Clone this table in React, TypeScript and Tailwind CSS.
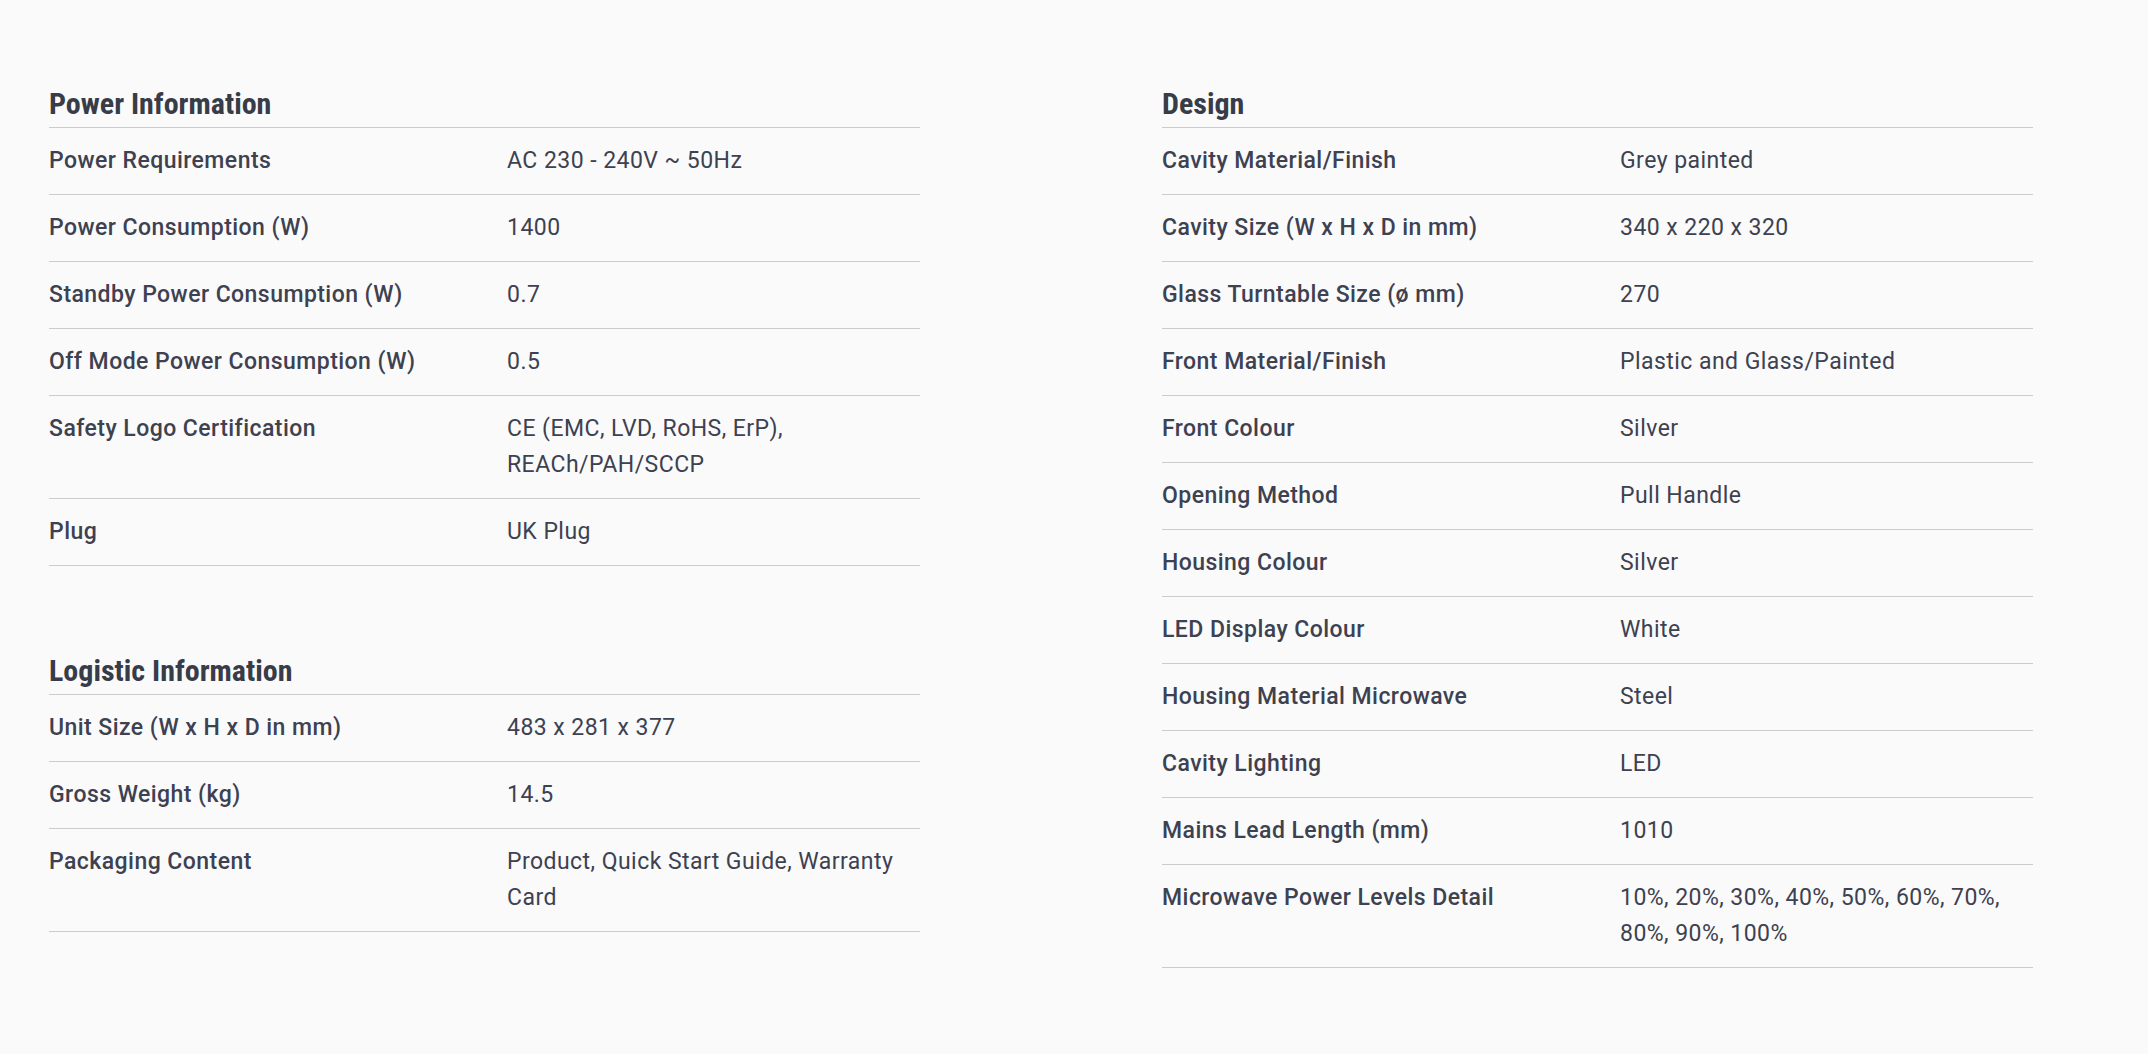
type Row = [string, string];

const power: Row[] = [
  ['Power Requirements', 'AC 230 - 240V ~ 50Hz'],
  ['Power Consumption (W)', '1400'],
  ['Standby Power Consumption (W)', '0.7'],
  ['Off Mode Power Consumption (W)', '0.5'],
  ['Safety Logo Certification', 'CE (EMC, LVD, RoHS, ErP), REACh/PAH/SCCP'],
  ['Plug', 'UK Plug'],
];

const logistic: Row[] = [
  ['Unit Size (W x H x D in mm)', '483 x 281 x 377'],
  ['Gross Weight (kg)', '14.5'],
  ['Packaging Content', 'Product, Quick Start Guide, Warranty Card'],
];

const design: Row[] = [
  ['Cavity Material/Finish', 'Grey painted'],
  ['Cavity Size (W x H x D in mm)', '340 x 220 x 320'],
  ['Glass Turntable Size (ø mm)', '270'],
  ['Front Material/Finish', 'Plastic and Glass/Painted'],
  ['Front Colour', 'Silver'],
  ['Opening Method', 'Pull Handle'],
  ['Housing Colour', 'Silver'],
  ['LED Display Colour', 'White'],
  ['Housing Material Microwave', 'Steel'],
  ['Cavity Lighting', 'LED'],
  ['Mains Lead Length (mm)', '1010'],
  ['Microwave Power Levels Detail', '10%, 20%, 30%, 40%, 50%, 60%, 70%, 80%, 90%, 100%'],
];

function SpecTable({ title, rows }: { title: string; rows: Row[] }) {
  return (
    <section>
      <h2 className="border-b border-[#cccccc] pb-[5px] text-[30px] font-bold leading-[36px] text-[#383c48] [font-stretch:75%]">
        {title}
      </h2>
      <dl>
        {rows.map(([k, v]) => (
          <div key={k} className="flex border-b border-[#cccccc] py-[15px] text-[23px] leading-[36px] tracking-[0.45px]">
            <dt className="w-[458px] shrink-0 font-medium">{k}</dt>
            <dd className="flex-1 pr-[10px]">{v}</dd>
          </div>
        ))}
      </dl>
    </section>
  );
}

export default function App() {
  return (
    <div className="min-h-screen bg-[#fafafa] pl-[49px] pt-[86px] text-[#3d4150] [font-family:Roboto,'Noto_Sans',sans-serif]">
      <div className="flex gap-[242px]">
        <div className="flex w-[871px] flex-col gap-[87px]">
          <SpecTable title="Power Information" rows={power} />
          <SpecTable title="Logistic Information" rows={logistic} />
        </div>
        <div className="w-[871px]">
          <SpecTable title="Design" rows={design} />
        </div>
      </div>
    </div>
  );
}
